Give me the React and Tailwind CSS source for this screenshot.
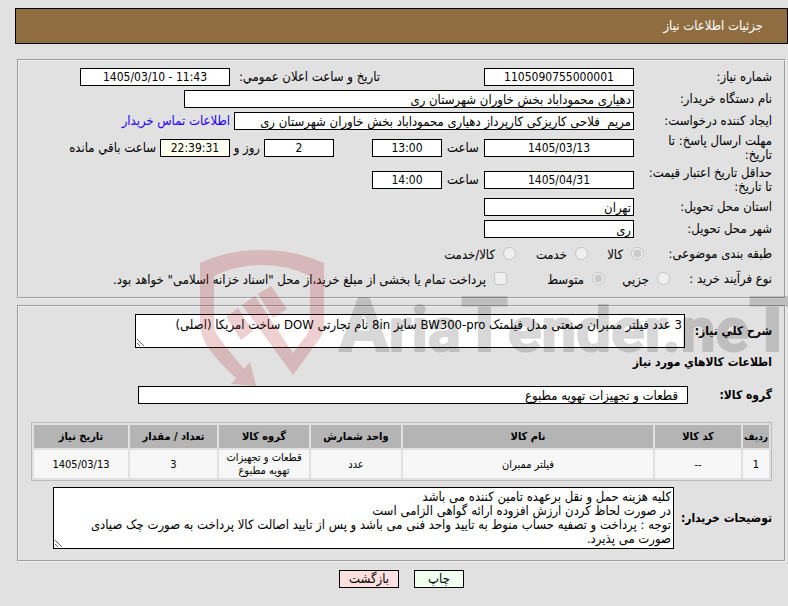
import React from 'react';

const Field = ({ id, value, className = '', numeric }) => (
   <input
      id={id}
      type="text"
      readOnly
      dir={numeric ? 'ltr' : 'rtl'}
      defaultValue={value}
      className={`h-[18px] border border-black px-[2px] leading-[16px] focus:outline-none ${
         numeric ? 'text-center text-[12px]' : 'text-[13px]'
      } ${className}`}
   />
);

const Row = ({ id, label, className = 'h-[22px]', children }) => (
   <div className={`flex items-center ${className}`}>
      <label htmlFor={id} className="w-[138px] shrink-0 pl-2">
         {label}
      </label>
      {children}
   </div>
);

const Option = ({ type = 'radio', name, label, checked, className = '' }) => (
   <label className={`flex shrink-0 items-center gap-2 ${className}`}>
      <input
         type={type}
         name={name}
         defaultChecked={checked}
         disabled
         className="h-[13px] w-[13px] shrink-0"
      />
      <span className="whitespace-nowrap pt-[2px]">{label}</span>
   </label>
);

const items = [
   {
      id: '1',
      code: '--',
      name: 'فیلتر ممبران',
      unit: 'عدد',
      group: 'قطعات و تجهیزات تهویه مطبوع',
      count: '3',
      date: '1405/03/13',
   },
];

const Watermark = () => (
   <svg
      className="pointer-events-none absolute left-[200px] top-[248px] h-[140px] w-[590px]"
      viewBox="0 0 590 140"
      aria-hidden="true"
   >
      <g fill="#b01c24" opacity="0.2">
         {/* shield outline with the arrow at its foot */}
         <path d="M0 15Q28 2 62 2Q96 2 124 15V75Q124 86 118 93L93 127L42 57L55 48L93 105L106 88Q110 83 110 75V28Q88 17 62 17Q36 17 14 28V75Q14 84 20 91Q28 102 44 121L50 114L56 138L31 136L36 130Q12 108 5 94Q0 85 0 75Z" />
         {/* the two loose blocks */}
         <path d="M26 69L38 60L53 83L41 92Z" />
         <path d="M58 46L71 38L87 61L73 70Z" />
      </g>
      <text
         x="139"
         y="103"
         fontFamily="Roboto, 'Liberation Sans', sans-serif"
         fontWeight="700"
         fontSize="62"
         fill="#000"
         stroke="#000"
         strokeWidth="2"
         strokeLinejoin="round"
         opacity="0.15"
         direction="ltr"
      >
         <tspan fontSize="74">A</tspan>ria<tspan fontSize="76">T</tspan>ender.ne<tspan fontSize="76">T</tspan>
      </text>
   </svg>
);

const App = () => {
   return (
      <div
         dir="rtl"
         className="relative min-h-screen overflow-hidden bg-[#e1e1e1] pt-2 pb-4 font-['DejaVu_Sans_Condensed','DejaVu_Sans',sans-serif] text-[13px] leading-[14px] text-black [&_input[type=text]]:bg-white"
      >
         <header className="ml-[15px] flex h-9 items-center border border-black bg-[#8f6d40] pr-6 text-white">
            <h1>جزئیات اطلاعات نیاز</h1>
         </header>

         <fieldset className="mt-[15px] mr-[2px] ml-[17px] border-2 border-[#f0f0f0] px-3 py-[5px] [border-style:groove]">
            <Row id="number" label="شماره نیاز:">
               <div className="w-[254px] shrink-0">
                  <Field id="number" numeric value="1105090755000001" className="w-[150px]" />
               </div>
               <label htmlFor="announced" className="w-[150px] shrink-0 whitespace-nowrap">
                  تاریخ و ساعت اعلان عمومي:
               </label>
               <Field id="announced" numeric value="1405/03/10 - 11:43" className="w-[150px]" />
            </Row>
            <Row id="buyer" label="نام دستگاه خریدار:">
               <Field id="buyer" value="دهیاری محموداباد بخش خاوران شهرستان ری" className="w-[450px]" />
            </Row>
            <Row id="creator" label="ایجاد کننده درخواست:">
               <Field
                  id="creator"
                  value="مریم  فلاحی کاریزکی کارپرداز دهیاری محموداباد بخش خاوران شهرستان ری"
                  className="w-[400px]"
               />
               <a href="#contact" className="mr-1 whitespace-nowrap text-[#2200ff]">
                  اطلاعات تماس خریدار
               </a>
            </Row>
            <Row id="deadline" label="مهلت ارسال پاسخ: تا تاریخ:" className="h-8">
               <Field id="deadline" numeric value="1405/03/13" className="w-[150px]" />
               <label htmlFor="deadline-time" className="w-[42px] text-center">
                  ساعت
               </label>
               <Field id="deadline-time" numeric value="13:00" className="w-[70px]" />
               <Field id="days" numeric value="2" className="mr-[38px] w-[70px]" />
               <label htmlFor="days" className="w-[34px] whitespace-nowrap pr-1">
                  روز و
               </label>
               <Field id="left" numeric value="22:39:31" className="w-[70px] bg-[#fffff0]!" />
               <label htmlFor="left" className="whitespace-nowrap pr-1">
                  ساعت باقي مانده
               </label>
            </Row>
            <Row id="validity" label="حداقل تاریخ اعتبار قیمت: تا تاریخ:" className="h-8">
               <Field id="validity" numeric value="1405/04/31" className="w-[150px]" />
               <label htmlFor="validity-time" className="w-[42px] text-center">
                  ساعت
               </label>
               <Field id="validity-time" numeric value="14:00" className="w-[70px]" />
            </Row>
            <Row id="province" label="استان محل تحویل:">
               <Field id="province" value="تهران" className="w-[150px]" />
            </Row>
            <Row id="city" label="شهر محل تحویل:">
               <Field id="city" value="ری" className="w-[150px]" />
            </Row>

            <div role="radiogroup" aria-label="طبقه بندی موضوعی" className="flex h-[27px] items-center">
               <span className="w-32 shrink-0">طبقه بندی موضوعی:</span>
               <Option name="subject" label="کالا" checked className="w-14" />
               <Option name="subject" label="خدمت" className="w-[72px]" />
               <Option name="subject" label="کالا/خدمت" />
            </div>
            <div role="radiogroup" aria-label="نوع فرآیند خرید" className="mb-[2px] flex h-[23px] items-center">
               <span className="w-[102px] shrink-0">نوع فرآیند خرید :</span>
               <Option name="process" label="جزیي" className="w-[65px]" />
               <Option name="process" label="متوسط" checked className="w-[98px]" />
               <Option
                  type="checkbox"
                  name="treasury"
                  label={'پرداخت تمام یا بخشی از مبلغ خرید،از محل "اسناد خزانه اسلامی" خواهد بود.'}
               />
            </div>
         </fieldset>

         <fieldset className="mt-[6px] mr-[2px] ml-[17px] border-2 border-[#f0f0f0] px-3 pt-[7px] pb-[11px] [border-style:groove]">
            <div className="flex items-center">
               <label htmlFor="summary" className="w-[87px] shrink-0 whitespace-nowrap text-[12px] font-bold">
                  شرح کلي نیاز:
               </label>
               <textarea
                  id="summary"
                  readOnly
                  className="h-[34px] w-[550px] resize overflow-hidden border border-black bg-white px-[2px] py-[2px] leading-[16px]"
                  defaultValue="3 عدد فیلتر ممبران صنعتی مدل فیلمتک BW300-pro سایز 8in نام تجارتی DOW ساخت امریکا (اصلی)"
               />
            </div>
            <h2 className="mt-[7px] text-[12px] leading-[14px] font-bold">اطلاعات کالاهاي مورد نیاز</h2>
            <div className="mt-[17px] flex items-center">
               <label htmlFor="group" className="w-[84px] shrink-0 text-[12px] font-bold">
                  گروه کالا:
               </label>
               <Field id="group" value="قطعات و تجهیزات تهویه مطبوع" className="w-[550px] pr-[9px]!" />
            </div>

            <table className="mt-[18px] w-full table-fixed border-separate border-spacing-[2px] border border-[#bbbbbb] text-center text-[11px] leading-[13px]">
               <thead>
                  <tr className="h-[23px] bg-[#b4b4b4]">
                     <th className="w-[26px] text-[10px]">ردیف</th>
                     <th className="w-[86px]">کد کالا</th>
                     <th>نام کالا</th>
                     <th className="w-[90px]">واحد شمارش</th>
                     <th className="w-[90px]">گروه کالا</th>
                     <th className="w-[87px]">تعداد / مقدار</th>
                     <th className="w-[94px]">تاریخ نیاز</th>
                  </tr>
               </thead>
               <tbody>
                  {items.map((item) => (
                     <tr key={item.id} className="h-[28px] bg-[#f7f7f7]">
                        <td>{item.id}</td>
                        <td>{item.code}</td>
                        <td>{item.name}</td>
                        <td>{item.unit}</td>
                        <td>{item.group}</td>
                        <td>{item.count}</td>
                        <td>{item.date}</td>
                     </tr>
                  ))}
               </tbody>
            </table>

            <div className="mt-[6px] flex items-center">
               <label htmlFor="notes" className="w-[98px] shrink-0 whitespace-nowrap text-[12px] font-bold">
                  توضیحات خریدار:
               </label>
               <textarea
                  id="notes"
                  readOnly
                  className="h-[62px] w-[621px] resize overflow-hidden border border-black bg-white px-[2px] py-[2px] leading-[14px]"
                  defaultValue={`کلیه هزینه حمل و نقل برعهده تامین کننده می باشد
در صورت لحاظ کردن ارزش افزوده ارائه گواهی الزامی است
توجه : پرداخت و تصفیه حساب منوط به تایید واحد فنی می باشد و پس از تایید اصالت کالا پرداخت به صورت چک صیادی صورت می پذیرد.`}
               />
            </div>
         </fieldset>

         <div className="mt-2 ml-[15px] flex justify-center gap-[15px]">
            <button type="button" className="h-[18px] w-[50px] border border-black bg-[#f0fff0]">
               چاپ
            </button>
            <button type="button" className="h-[18px] w-[60px] border border-black bg-[#ffe0e0]">
               بازگشت
            </button>
         </div>

         <Watermark />
      </div>
   );
};

export default App;
